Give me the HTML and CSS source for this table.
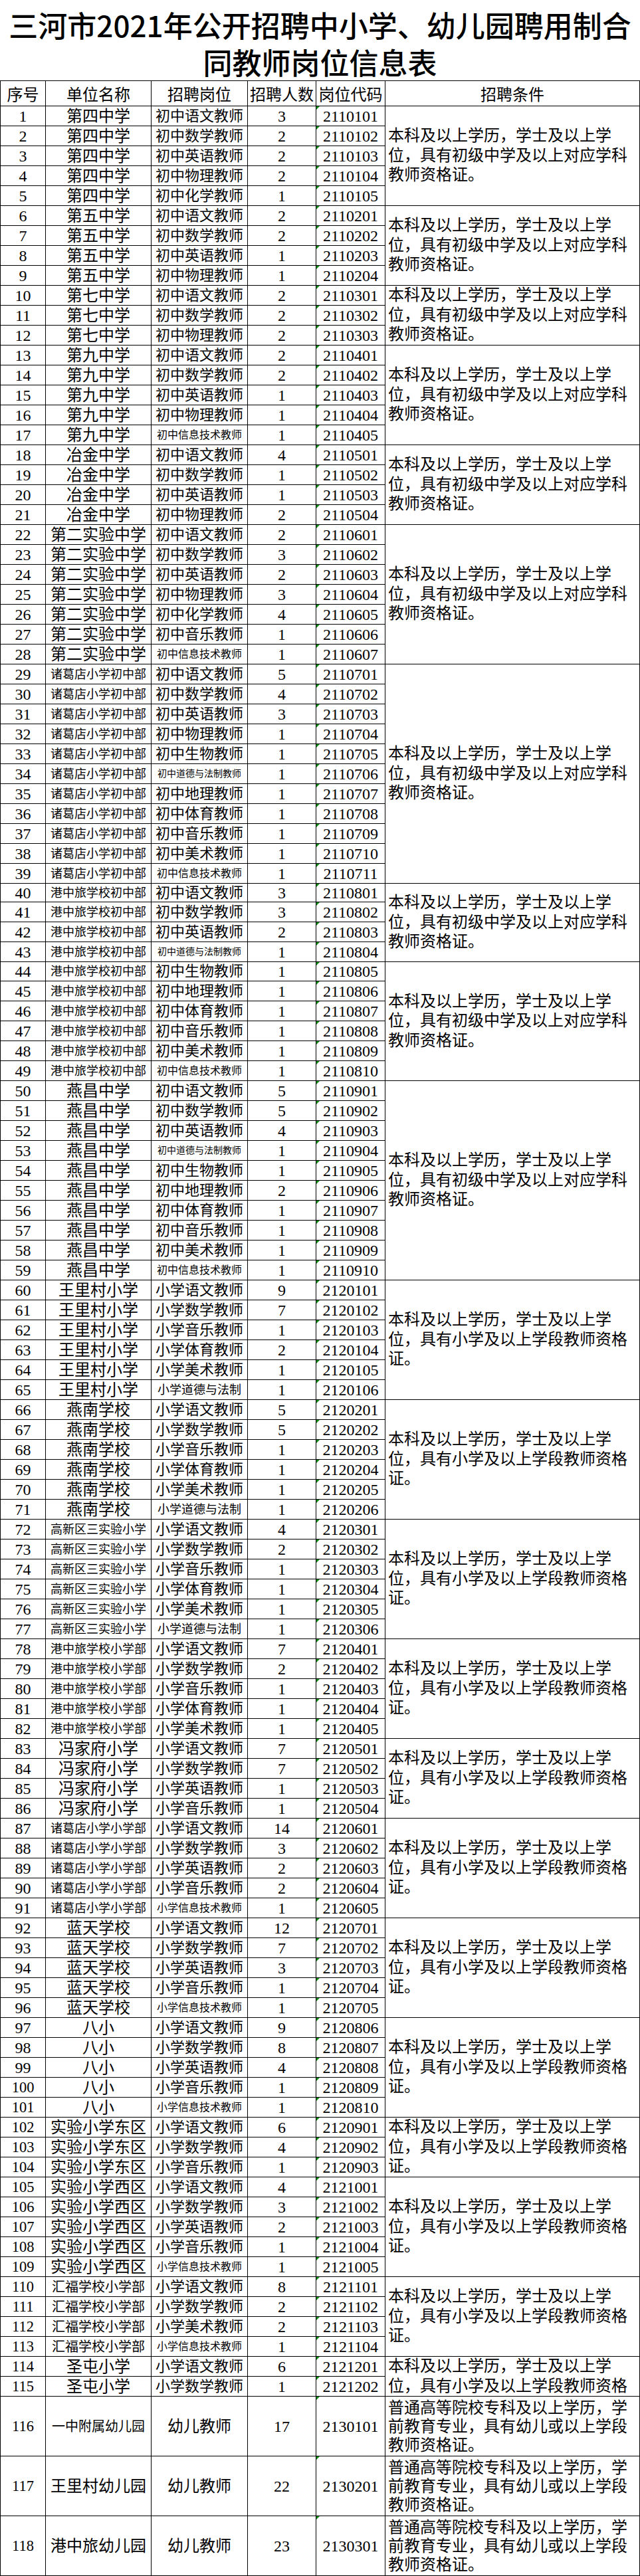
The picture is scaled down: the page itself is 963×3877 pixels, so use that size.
FILE: index.html
```html
<!DOCTYPE html>
<html lang="zh-CN">
<head>
<meta charset="utf-8">
<title>三河市2021年公开招聘中小学、幼儿园聘用制合同教师岗位信息表</title>
<link rel="stylesheet" href="styles.css">
</head>
<body>
<h1 class="title"><span class="title-line">三河市2021年公开招聘中小学、幼儿园聘用制合</span><span class="title-line">同教师岗位信息表</span></h1>
<table class="sheet">
<colgroup>
<col class="c-seq"><col class="c-unit"><col class="c-post"><col class="c-num"><col class="c-code"><col class="c-cond">
</colgroup>
<thead>
<tr class="head"><th>序号</th><th>单位名称</th><th>招聘岗位</th><th>招聘人数</th><th>岗位代码</th><th>招聘条件</th></tr>
</thead>
<tbody>
<tr><td>1</td><td>第四中学</td><td>初中语文教师</td><td>3</td><td class="code">2110101</td><td class="cond" rowspan="5">本科及以上学历，学士及以上学<br>位，具有初级中学及以上对应学科<br>教师资格证。</td></tr>
<tr><td>2</td><td>第四中学</td><td>初中数学教师</td><td>2</td><td class="code">2110102</td></tr>
<tr><td>3</td><td>第四中学</td><td>初中英语教师</td><td>2</td><td class="code">2110103</td></tr>
<tr><td>4</td><td>第四中学</td><td>初中物理教师</td><td>2</td><td class="code">2110104</td></tr>
<tr><td>5</td><td>第四中学</td><td>初中化学教师</td><td>1</td><td class="code">2110105</td></tr>
<tr><td>6</td><td>第五中学</td><td>初中语文教师</td><td>2</td><td class="code">2110201</td><td class="cond" rowspan="4">本科及以上学历，学士及以上学<br>位，具有初级中学及以上对应学科<br>教师资格证。</td></tr>
<tr><td>7</td><td>第五中学</td><td>初中数学教师</td><td>2</td><td class="code">2110202</td></tr>
<tr><td>8</td><td>第五中学</td><td>初中英语教师</td><td>1</td><td class="code">2110203</td></tr>
<tr><td>9</td><td>第五中学</td><td>初中物理教师</td><td>1</td><td class="code">2110204</td></tr>
<tr><td>10</td><td>第七中学</td><td>初中语文教师</td><td>2</td><td class="code">2110301</td><td class="cond" rowspan="3">本科及以上学历，学士及以上学<br>位，具有初级中学及以上对应学科<br>教师资格证。</td></tr>
<tr><td>11</td><td>第七中学</td><td>初中数学教师</td><td>2</td><td class="code">2110302</td></tr>
<tr><td>12</td><td>第七中学</td><td>初中物理教师</td><td>2</td><td class="code">2110303</td></tr>
<tr><td>13</td><td>第九中学</td><td>初中语文教师</td><td>2</td><td class="code">2110401</td><td class="cond" rowspan="5">本科及以上学历，学士及以上学<br>位，具有初级中学及以上对应学科<br>教师资格证。</td></tr>
<tr><td>14</td><td>第九中学</td><td>初中数学教师</td><td>2</td><td class="code">2110402</td></tr>
<tr><td>15</td><td>第九中学</td><td>初中英语教师</td><td>1</td><td class="code">2110403</td></tr>
<tr><td>16</td><td>第九中学</td><td>初中物理教师</td><td>1</td><td class="code">2110404</td></tr>
<tr><td>17</td><td>第九中学</td><td class="p16">初中信息技术教师</td><td>1</td><td class="code">2110405</td></tr>
<tr><td>18</td><td>冶金中学</td><td>初中语文教师</td><td>4</td><td class="code">2110501</td><td class="cond" rowspan="4">本科及以上学历，学士及以上学<br>位，具有初级中学及以上对应学科<br>教师资格证。</td></tr>
<tr><td>19</td><td>冶金中学</td><td>初中数学教师</td><td>1</td><td class="code">2110502</td></tr>
<tr><td>20</td><td>冶金中学</td><td>初中英语教师</td><td>1</td><td class="code">2110503</td></tr>
<tr><td>21</td><td>冶金中学</td><td>初中物理教师</td><td>2</td><td class="code">2110504</td></tr>
<tr><td>22</td><td>第二实验中学</td><td>初中语文教师</td><td>2</td><td class="code">2110601</td><td class="cond" rowspan="7">本科及以上学历，学士及以上学<br>位，具有初级中学及以上对应学科<br>教师资格证。</td></tr>
<tr><td>23</td><td>第二实验中学</td><td>初中数学教师</td><td>3</td><td class="code">2110602</td></tr>
<tr><td>24</td><td>第二实验中学</td><td>初中英语教师</td><td>2</td><td class="code">2110603</td></tr>
<tr><td>25</td><td>第二实验中学</td><td>初中物理教师</td><td>3</td><td class="code">2110604</td></tr>
<tr><td>26</td><td>第二实验中学</td><td>初中化学教师</td><td>4</td><td class="code">2110605</td></tr>
<tr><td>27</td><td>第二实验中学</td><td>初中音乐教师</td><td>1</td><td class="code">2110606</td></tr>
<tr><td>28</td><td>第二实验中学</td><td class="p16">初中信息技术教师</td><td>1</td><td class="code">2110607</td></tr>
<tr><td>29</td><td class="u18">诸葛店小学初中部</td><td>初中语文教师</td><td>5</td><td class="code">2110701</td><td class="cond" rowspan="11">本科及以上学历，学士及以上学<br>位，具有初级中学及以上对应学科<br>教师资格证。</td></tr>
<tr><td>30</td><td class="u18">诸葛店小学初中部</td><td>初中数学教师</td><td>4</td><td class="code">2110702</td></tr>
<tr><td>31</td><td class="u18">诸葛店小学初中部</td><td>初中英语教师</td><td>3</td><td class="code">2110703</td></tr>
<tr><td>32</td><td class="u18">诸葛店小学初中部</td><td>初中物理教师</td><td>1</td><td class="code">2110704</td></tr>
<tr><td>33</td><td class="u18">诸葛店小学初中部</td><td>初中生物教师</td><td>1</td><td class="code">2110705</td></tr>
<tr><td>34</td><td class="u18">诸葛店小学初中部</td><td class="p14">初中道德与法制教师</td><td>1</td><td class="code">2110706</td></tr>
<tr><td>35</td><td class="u18">诸葛店小学初中部</td><td>初中地理教师</td><td>1</td><td class="code">2110707</td></tr>
<tr><td>36</td><td class="u18">诸葛店小学初中部</td><td>初中体育教师</td><td>1</td><td class="code">2110708</td></tr>
<tr><td>37</td><td class="u18">诸葛店小学初中部</td><td>初中音乐教师</td><td>1</td><td class="code">2110709</td></tr>
<tr><td>38</td><td class="u18">诸葛店小学初中部</td><td>初中美术教师</td><td>1</td><td class="code">2110710</td></tr>
<tr><td>39</td><td class="u18">诸葛店小学初中部</td><td class="p16">初中信息技术教师</td><td>1</td><td class="code">2110711</td></tr>
<tr class="h28"><td>40</td><td class="u18">港中旅学校初中部</td><td>初中语文教师</td><td>3</td><td class="code">2110801</td><td class="cond" rowspan="4">本科及以上学历，学士及以上学<br>位，具有初级中学及以上对应学科<br>教师资格证。</td></tr>
<tr><td>41</td><td class="u18">港中旅学校初中部</td><td>初中数学教师</td><td>3</td><td class="code">2110802</td></tr>
<tr><td>42</td><td class="u18">港中旅学校初中部</td><td>初中英语教师</td><td>2</td><td class="code">2110803</td></tr>
<tr><td>43</td><td class="u18">港中旅学校初中部</td><td class="p14">初中道德与法制教师</td><td>1</td><td class="code">2110804</td></tr>
<tr class="h29"><td>44</td><td class="u18">港中旅学校初中部</td><td>初中生物教师</td><td>1</td><td class="code">2110805</td><td class="cond" rowspan="6">本科及以上学历，学士及以上学<br>位，具有初级中学及以上对应学科<br>教师资格证。</td></tr>
<tr><td>45</td><td class="u18">港中旅学校初中部</td><td>初中地理教师</td><td>1</td><td class="code">2110806</td></tr>
<tr><td>46</td><td class="u18">港中旅学校初中部</td><td>初中体育教师</td><td>1</td><td class="code">2110807</td></tr>
<tr><td>47</td><td class="u18">港中旅学校初中部</td><td>初中音乐教师</td><td>1</td><td class="code">2110808</td></tr>
<tr><td>48</td><td class="u18">港中旅学校初中部</td><td>初中美术教师</td><td>1</td><td class="code">2110809</td></tr>
<tr><td>49</td><td class="u18">港中旅学校初中部</td><td class="p16">初中信息技术教师</td><td>1</td><td class="code">2110810</td></tr>
<tr><td>50</td><td>燕昌中学</td><td>初中语文教师</td><td>5</td><td class="code">2110901</td><td class="cond" rowspan="10">本科及以上学历，学士及以上学<br>位，具有初级中学及以上对应学科<br>教师资格证。</td></tr>
<tr><td>51</td><td>燕昌中学</td><td>初中数学教师</td><td>5</td><td class="code">2110902</td></tr>
<tr><td>52</td><td>燕昌中学</td><td>初中英语教师</td><td>4</td><td class="code">2110903</td></tr>
<tr><td>53</td><td>燕昌中学</td><td class="p14">初中道德与法制教师</td><td>1</td><td class="code">2110904</td></tr>
<tr><td>54</td><td>燕昌中学</td><td>初中生物教师</td><td>1</td><td class="code">2110905</td></tr>
<tr><td>55</td><td>燕昌中学</td><td>初中地理教师</td><td>2</td><td class="code">2110906</td></tr>
<tr><td>56</td><td>燕昌中学</td><td>初中体育教师</td><td>1</td><td class="code">2110907</td></tr>
<tr><td>57</td><td>燕昌中学</td><td>初中音乐教师</td><td>1</td><td class="code">2110908</td></tr>
<tr><td>58</td><td>燕昌中学</td><td>初中美术教师</td><td>1</td><td class="code">2110909</td></tr>
<tr><td>59</td><td>燕昌中学</td><td class="p16">初中信息技术教师</td><td>1</td><td class="code">2110910</td></tr>
<tr><td>60</td><td>王里村小学</td><td>小学语文教师</td><td>9</td><td class="code">2120101</td><td class="cond" rowspan="6">本科及以上学历，学士及以上学<br>位，具有小学及以上学段教师资格<br>证。</td></tr>
<tr><td>61</td><td>王里村小学</td><td>小学数学教师</td><td>7</td><td class="code">2120102</td></tr>
<tr><td>62</td><td>王里村小学</td><td>小学音乐教师</td><td>1</td><td class="code">2120103</td></tr>
<tr><td>63</td><td>王里村小学</td><td>小学体育教师</td><td>2</td><td class="code">2120104</td></tr>
<tr><td>64</td><td>王里村小学</td><td>小学美术教师</td><td>1</td><td class="code">2120105</td></tr>
<tr><td>65</td><td>王里村小学</td><td class="p18">小学道德与法制</td><td>1</td><td class="code">2120106</td></tr>
<tr><td>66</td><td>燕南学校</td><td>小学语文教师</td><td>5</td><td class="code">2120201</td><td class="cond" rowspan="6">本科及以上学历，学士及以上学<br>位，具有小学及以上学段教师资格<br>证。</td></tr>
<tr><td>67</td><td>燕南学校</td><td>小学数学教师</td><td>5</td><td class="code">2120202</td></tr>
<tr><td>68</td><td>燕南学校</td><td>小学音乐教师</td><td>1</td><td class="code">2120203</td></tr>
<tr><td>69</td><td>燕南学校</td><td>小学体育教师</td><td>1</td><td class="code">2120204</td></tr>
<tr><td>70</td><td>燕南学校</td><td>小学美术教师</td><td>1</td><td class="code">2120205</td></tr>
<tr><td>71</td><td>燕南学校</td><td class="p18">小学道德与法制</td><td>1</td><td class="code">2120206</td></tr>
<tr><td>72</td><td class="u18">高新区三实验小学</td><td>小学语文教师</td><td>4</td><td class="code">2120301</td><td class="cond" rowspan="6">本科及以上学历，学士及以上学<br>位，具有小学及以上学段教师资格<br>证。</td></tr>
<tr><td>73</td><td class="u18">高新区三实验小学</td><td>小学数学教师</td><td>2</td><td class="code">2120302</td></tr>
<tr><td>74</td><td class="u18">高新区三实验小学</td><td>小学音乐教师</td><td>1</td><td class="code">2120303</td></tr>
<tr><td>75</td><td class="u18">高新区三实验小学</td><td>小学体育教师</td><td>1</td><td class="code">2120304</td></tr>
<tr><td>76</td><td class="u18">高新区三实验小学</td><td>小学美术教师</td><td>1</td><td class="code">2120305</td></tr>
<tr><td>77</td><td class="u18">高新区三实验小学</td><td class="p18">小学道德与法制</td><td>1</td><td class="code">2120306</td></tr>
<tr><td>78</td><td class="u18">港中旅学校小学部</td><td>小学语文教师</td><td>7</td><td class="code">2120401</td><td class="cond" rowspan="5">本科及以上学历，学士及以上学<br>位，具有小学及以上学段教师资格<br>证。</td></tr>
<tr><td>79</td><td class="u18">港中旅学校小学部</td><td>小学数学教师</td><td>2</td><td class="code">2120402</td></tr>
<tr><td>80</td><td class="u18">港中旅学校小学部</td><td>小学音乐教师</td><td>1</td><td class="code">2120403</td></tr>
<tr><td>81</td><td class="u18">港中旅学校小学部</td><td>小学体育教师</td><td>1</td><td class="code">2120404</td></tr>
<tr><td>82</td><td class="u18">港中旅学校小学部</td><td>小学美术教师</td><td>1</td><td class="code">2120405</td></tr>
<tr><td>83</td><td>冯家府小学</td><td>小学语文教师</td><td>7</td><td class="code">2120501</td><td class="cond" rowspan="4">本科及以上学历，学士及以上学<br>位，具有小学及以上学段教师资格<br>证。</td></tr>
<tr><td>84</td><td>冯家府小学</td><td>小学数学教师</td><td>7</td><td class="code">2120502</td></tr>
<tr><td>85</td><td>冯家府小学</td><td>小学英语教师</td><td>1</td><td class="code">2120503</td></tr>
<tr><td>86</td><td>冯家府小学</td><td>小学音乐教师</td><td>1</td><td class="code">2120504</td></tr>
<tr><td>87</td><td class="u18">诸葛店小学小学部</td><td>小学语文教师</td><td>14</td><td class="code">2120601</td><td class="cond" rowspan="5">本科及以上学历，学士及以上学<br>位，具有小学及以上学段教师资格<br>证。</td></tr>
<tr><td>88</td><td class="u18">诸葛店小学小学部</td><td>小学数学教师</td><td>3</td><td class="code">2120602</td></tr>
<tr><td>89</td><td class="u18">诸葛店小学小学部</td><td>小学英语教师</td><td>2</td><td class="code">2120603</td></tr>
<tr><td>90</td><td class="u18">诸葛店小学小学部</td><td>小学音乐教师</td><td>2</td><td class="code">2120604</td></tr>
<tr><td>91</td><td class="u18">诸葛店小学小学部</td><td class="p16">小学信息技术教师</td><td>1</td><td class="code">2120605</td></tr>
<tr><td>92</td><td>蓝天学校</td><td>小学语文教师</td><td>12</td><td class="code">2120701</td><td class="cond" rowspan="5">本科及以上学历，学士及以上学<br>位，具有小学及以上学段教师资格<br>证。</td></tr>
<tr><td>93</td><td>蓝天学校</td><td>小学数学教师</td><td>7</td><td class="code">2120702</td></tr>
<tr><td>94</td><td>蓝天学校</td><td>小学英语教师</td><td>3</td><td class="code">2120703</td></tr>
<tr><td>95</td><td>蓝天学校</td><td>小学音乐教师</td><td>1</td><td class="code">2120704</td></tr>
<tr><td>96</td><td>蓝天学校</td><td class="p16">小学信息技术教师</td><td>1</td><td class="code">2120705</td></tr>
<tr><td>97</td><td>八小</td><td>小学语文教师</td><td>9</td><td class="code">2120806</td><td class="cond" rowspan="5">本科及以上学历，学士及以上学<br>位，具有小学及以上学段教师资格<br>证。</td></tr>
<tr><td>98</td><td>八小</td><td>小学数学教师</td><td>8</td><td class="code">2120807</td></tr>
<tr><td>99</td><td>八小</td><td>小学英语教师</td><td>4</td><td class="code">2120808</td></tr>
<tr><td class="n3">100</td><td>八小</td><td>小学音乐教师</td><td>1</td><td class="code">2120809</td></tr>
<tr><td class="n3">101</td><td>八小</td><td class="p16">小学信息技术教师</td><td>1</td><td class="code">2120810</td></tr>
<tr><td class="n3">102</td><td>实验小学东区</td><td>小学语文教师</td><td>6</td><td class="code">2120901</td><td class="cond" rowspan="3">本科及以上学历，学士及以上学<br>位，具有小学及以上学段教师资格<br>证。</td></tr>
<tr><td class="n3">103</td><td>实验小学东区</td><td>小学数学教师</td><td>4</td><td class="code">2120902</td></tr>
<tr><td class="n3">104</td><td>实验小学东区</td><td>小学音乐教师</td><td>1</td><td class="code">2120903</td></tr>
<tr><td class="n3">105</td><td>实验小学西区</td><td>小学语文教师</td><td>4</td><td class="code">2121001</td><td class="cond" rowspan="5">本科及以上学历，学士及以上学<br>位，具有小学及以上学段教师资格<br>证。</td></tr>
<tr><td class="n3">106</td><td>实验小学西区</td><td>小学数学教师</td><td>3</td><td class="code">2121002</td></tr>
<tr><td class="n3">107</td><td>实验小学西区</td><td>小学英语教师</td><td>2</td><td class="code">2121003</td></tr>
<tr><td class="n3">108</td><td>实验小学西区</td><td>小学音乐教师</td><td>1</td><td class="code">2121004</td></tr>
<tr><td class="n3">109</td><td>实验小学西区</td><td class="p16">小学信息技术教师</td><td>1</td><td class="code">2121005</td></tr>
<tr><td class="n3">110</td><td class="u20">汇福学校小学部</td><td>小学语文教师</td><td>8</td><td class="code">2121101</td><td class="cond" rowspan="4">本科及以上学历，学士及以上学<br>位，具有小学及以上学段教师资格<br>证。</td></tr>
<tr><td class="n3">111</td><td class="u20">汇福学校小学部</td><td>小学数学教师</td><td>2</td><td class="code">2121102</td></tr>
<tr><td class="n3">112</td><td class="u20">汇福学校小学部</td><td>小学美术教师</td><td>2</td><td class="code">2121103</td></tr>
<tr><td class="n3">113</td><td class="u20">汇福学校小学部</td><td class="p16">小学信息技术教师</td><td>1</td><td class="code">2121104</td></tr>
<tr><td class="n3">114</td><td>圣屯小学</td><td>小学语文教师</td><td>6</td><td class="code">2121201</td><td class="cond clip" rowspan="2"><div class="clip-box">本科及以上学历，学士及以上学<br>位，具有小学及以上学段教师资格<br>证。</div></td></tr>
<tr><td class="n3">115</td><td>圣屯小学</td><td>小学数学教师</td><td>1</td><td class="code">2121202</td></tr>
<tr class="tall"><td class="n3">116</td><td class="u20">一中附属幼儿园</td><td class="p24">幼儿教师</td><td>17</td><td class="code">2130101</td><td class="cond kg">普通高等院校专科及以上学历，学<br>前教育专业，具有幼儿或以上学段<br>教师资格证。</td></tr>
<tr class="tall"><td class="n3">117</td><td>王里村幼儿园</td><td class="p24">幼儿教师</td><td>22</td><td class="code">2130201</td><td class="cond kg">普通高等院校专科及以上学历，学<br>前教育专业，具有幼儿或以上学段<br>教师资格证。</td></tr>
<tr class="tall"><td class="n3">118</td><td>港中旅幼儿园</td><td class="p24">幼儿教师</td><td>23</td><td class="code">2130301</td><td class="cond kg">普通高等院校专科及以上学历，学<br>前教育专业，具有幼儿或以上学段<br>教师资格证。</td></tr>
</tbody>
</table>
</body>
</html>
```

FILE: styles.css
```css
html, body {
  margin: 0;
  padding: 0;
  background: #fff;
}

body {
  color: #000;
  font-family: "Liberation Serif", "Noto Sans CJK SC", serif;
  width: 963px;
}

.title {
  margin: 0;
  box-sizing: border-box;
  height: 121px;
  padding-top: 9px;
  font-family: "Noto Sans CJK SC", sans-serif;
  font-size: 44px;
  font-weight: 500;
  line-height: 56px;
  text-align: center;
}

.title-line {
  display: block;
  white-space: nowrap;
}

.sheet {
  border-collapse: collapse;
  table-layout: fixed;
  width: 962px;
}

.c-seq { width: 68px; }
.c-unit { width: 159px; }
.c-post { width: 145px; }
.c-num { width: 103px; }
.c-code { width: 104px; }
.c-cond { width: 383px; }

.sheet th,
.sheet td {
  border: 1px solid #000;
  padding: 0;
  overflow: hidden;
  white-space: nowrap;
  text-align: center;
  vertical-align: middle;
  font-size: 24px;
  line-height: 24px;
  font-weight: normal;
}

.sheet th {
  font-family: "Noto Sans CJK SC", sans-serif;
}

.sheet .head {
  height: 38px;
}

.sheet tbody tr {
  height: 30px;
}

.sheet tbody tr.h28 { height: 28px; }
.sheet tbody tr.h29 { height: 29px; }
.sheet tbody tr.tall { height: 90px; }

.sheet td.n3 { font-size: 22.5px; }

.sheet td:nth-child(3) { font-size: 22px; }

.sheet td.u18 { font-size: 18px; }
.sheet td.u20 { font-size: 20px; }

.sheet td.p14 { font-size: 14px; }
.sheet td.p16 { font-size: 16px; }
.sheet td.p18 { font-size: 18px; }
.sheet td.p24 { font-size: 24px; }

.sheet td.code {
  position: relative;
}

.sheet td.code::before {
  content: "";
  position: absolute;
  left: 0;
  top: 0;
  width: 0;
  height: 0;
  border-top: 5px solid #138a13;
  border-right: 5px solid transparent;
}

.sheet td.cond {
  text-align: left;
  padding-left: 4px;
  font-size: 24px;
  line-height: 29.5px;
}

.sheet td.cond.clip {
  vertical-align: top;
}

.clip-box {
  height: 58px;
  overflow: hidden;
}

.sheet td.cond.kg {
  line-height: 28px;
}
```
